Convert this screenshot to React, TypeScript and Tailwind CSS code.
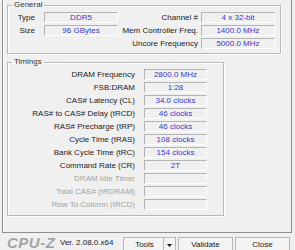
const font = { fontFamily: '"Liberation Sans", Arial, sans-serif' };

type Row = { label: string; value: string; disabled?: boolean };

const timings: Row[] = [
  { label: "DRAM Frequency", value: "2800.0 MHz" },
  { label: "FSB:DRAM", value: "1:28" },
  { label: "CAS# Latency (CL)", value: "34.0 clocks" },
  { label: "RAS# to CAS# Delay (tRCD)", value: "46 clocks" },
  { label: "RAS# Precharge (tRP)", value: "46 clocks" },
  { label: "Cycle Time (tRAS)", value: "108 clocks" },
  { label: "Bank Cycle Time (tRC)", value: "154 clocks" },
  { label: "Command Rate (CR)", value: "2T" },
  { label: "DRAM Idle Timer", value: "", disabled: true },
  { label: "Total CAS# (tRDRAM)", value: "", disabled: true },
  { label: "Row To Column (tRCD)", value: "", disabled: true },
];

function Field({ value, className }: { value: string; className?: string }) {
  return (
    <div
      className={`h-[11px] flex items-center justify-center border border-t-[#b4b4b4] border-l-[#b4b4b4] border-b-white border-r-white bg-[#f0f0f0] text-[8px] leading-none text-[#3a3ac8] ${className ?? ""}`}
    >
      {value}
    </div>
  );
}

function Label({ text, className }: { text: string; className?: string }) {
  return (
    <div className={`h-[11px] flex items-center justify-end text-[8px] leading-none whitespace-nowrap ${className ?? ""}`}>
      {text}
    </div>
  );
}

const groupCls =
  "border border-[#b9b9b9] shadow-[1px_1px_0_#ffffff,inset_1px_1px_0_#ffffff] m-0 min-w-0";

function Legend({ text }: { text: string }) {
  return (
    <legend className="ml-[4px] px-[2px] h-[10px] text-[8px] leading-[10px] text-[#333]">
      {text}
    </legend>
  );
}

export default function App() {
  return (
    <div className="w-[295px] h-[250px] bg-[#f0f0f0] overflow-hidden text-[#222]" style={font}>
      <div className="ml-[2px] w-[290px] h-[233px] border-l border-r border-b border-[#8e8e8e] shadow-[inset_1px_0_0_#ffffff]">
        <fieldset className={`${groupCls} ml-[4px] w-[274px] pt-[2px] pb-[4px]`}>
          <Legend text="General" />
          <div className="grid grid-cols-[36px_74px_83px_74px] gap-y-[2px]">
            <Label text="Type" className="pr-[9px]" />
            <Field value="DDR5" />
            <Label text="Channel #" className="pr-[3px]" />
            <Field value="4 x 32-bit" />
            <Label text="Size" className="pr-[9px]" />
            <Field value="96 GBytes" />
            <Label text="Mem Controller Freq." className="pr-[3px]" />
            <Field value="1400.0 MHz" />
            <div />
            <div />
            <Label text="Uncore Frequency" className="pr-[3px]" />
            <Field value="5000.0 MHz" />
          </div>
        </fieldset>

        <fieldset className={`${groupCls} ml-[4px] mt-[3px] w-[217px] pt-[2px] pb-[5px]`}>
          <Legend text="Timings" />
          <div className="grid grid-cols-[136px_63px] gap-y-[2px]">
            {timings.map((t) => (
              <div key={t.label} className="contents">
                <Label text={t.label} className={`pr-[9px] ${t.disabled ? "text-[#a3a3a3]" : ""}`} />
                <Field value={t.value} />
              </div>
            ))}
          </div>
        </fieldset>
      </div>

      <div className="flex items-start h-[17px]">
        <div className="ml-[7px] mt-[2px] w-[53px] text-[15px] leading-[16px] font-bold italic tracking-[0.5px] text-[#a5a5a5]">
          CPU-Z
        </div>
        <div className="mt-[6px] w-[63px] text-[8px] leading-none text-[#222]">Ver. 2.08.0.x64</div>
        <div className="mt-[4px] flex gap-[2px] text-[8px] leading-none">
          <div className="w-[53px] h-[16px] flex border border-[#b8b8b8] bg-[#f3f3f3]">
            <div className="flex-1 flex items-center justify-center pl-[2px]">Tools</div>
            <div className="w-[12px] border-l border-[#b8b8b8] flex items-center justify-center">
              <svg width="5" height="3" viewBox="0 0 5 3">
                <path d="M0 0h5L2.5 3z" fill="#111" />
              </svg>
            </div>
          </div>
          <div className="w-[55px] h-[16px] flex items-center justify-center border border-[#b8b8b8] bg-[#f3f3f3]">
            Validate
          </div>
          <div className="w-[55px] h-[16px] flex items-center justify-center border border-[#b8b8b8] bg-[#f3f3f3]">
            Close
          </div>
        </div>
      </div>
    </div>
  );
}
